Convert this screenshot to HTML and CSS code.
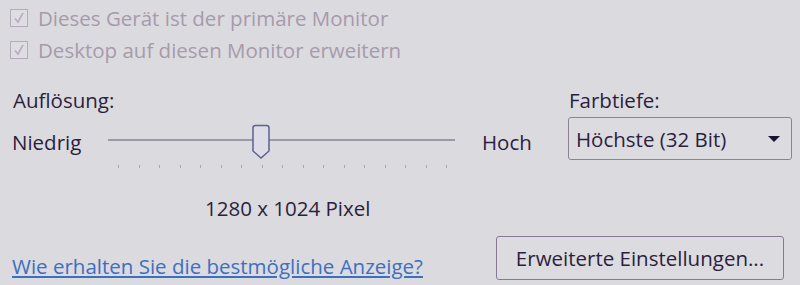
FILE: index.html
```html
<!DOCTYPE html>
<html lang="de">
<head>
    <meta charset="UTF-8">
    <title>Bildschirmauflösung</title>
    <link rel="stylesheet" href="styles.css">
</head>
<body>
<div class="panel">
    <div class="checks">
        <label class="check-row">
            <span class="check-box"><svg width="16" height="16" viewBox="0 0 16 16"><path d="M4 8.5 L7 12 L12 3" fill="none" stroke="#b8aec0" stroke-width="1.6"/></svg></span>
            Dieses Gerät ist der primäre Monitor
        </label>
        <label class="check-row">
            <span class="check-box"><svg width="16" height="16" viewBox="0 0 16 16"><path d="M4 8.5 L7 12 L12 3" fill="none" stroke="#b8aec0" stroke-width="1.6"/></svg></span>
            Desktop auf diesen Monitor erweitern
        </label>
    </div>

    <div class="settings">
        <div class="res-col">
            <div class="caption">Auflösung:</div>
            <div class="slider-row">
                <span class="end-label">Niedrig</span>
                <div class="slider">
                    <div class="track"></div>
                    <svg class="thumb" width="20" height="36" viewBox="0 0 20 36">
                        <path d="M2 4 Q2 1.5 4.5 1.5 H15.5 Q18 1.5 18 4 V27 L10 34 L2 27 Z" fill="#dddce6" stroke="#5e6090" stroke-width="1.5"/>
                    </svg>
                    <div class="ticks">
                        <i></i><i></i><i></i><i></i><i></i><i></i><i></i><i></i><i></i>
                        <i></i><i></i><i></i><i></i><i></i><i></i><i></i><i></i>
                    </div>
                </div>
                <span class="end-label high">Hoch</span>
            </div>
            <div class="pixels">1280 x 1024 Pixel</div>
        </div>
        <div class="depth-col">
            <div class="caption">Farbtiefe:</div>
            <div class="select">
                <span>Höchste (32 Bit)</span>
                <span class="arrow"></span>
            </div>
        </div>
    </div>

    <div class="bottom">
        <a class="help-link" href="#">Wie erhalten Sie die bestmögliche Anzeige?</a>
        <button class="btn">Erweiterte Einstellungen...</button>
    </div>
</div>
</body>
</html>
```

FILE: styles.css
```css
body{
    margin: 0;
    background-color: #dbdadf;
    font-family: "Open Sans", "Noto Sans", sans-serif;
    font-size: 20.5px;
    color: #2b1f3e;
}
.panel{
    width: 800px;
    height: 285px;
    padding: 0 0 0 10px;
    box-sizing: border-box;
    overflow: hidden;
}
.checks{
    padding-top: 2px;
}
.check-row{
    display: flex;
    align-items: center;
    height: 32px;
    color: #a79aab;
}
.check-box{
    width: 16px;
    height: 16px;
    border: 1px solid #b4acbc;
    background-color: #dedde2;
    margin-right: 10px;
    display: flex;
}
.settings{
    display: flex;
    margin-top: 20px;
}
.res-col{
    width: 556px;
    padding-left: 2px;
}
.caption{
    height: 28px;
    line-height: 28px;
}
.slider-row{
    display: flex;
    align-items: flex-start;
    margin-top: 10px;
}
.end-label{
    line-height: 36px;
    width: 96px;
}
.end-label.high{
    width: auto;
    margin-left: 27px;
}
.slider{
    position: relative;
    width: 347px;
    height: 46px;
}
.track{
    margin-top: 15px;
    height: 2px;
    background-color: #9c98a8;
}
.thumb{
    position: absolute;
    left: 143px;
    top: 0;
}
.ticks{
    display: flex;
    justify-content: space-between;
    margin: 24px 8px 0 10px;
}
.ticks i{
    width: 1px;
    height: 3px;
    background-color: #aaa6b2;
}
.pixels{
    margin: 24px 0 0 193px;
    line-height: 28px;
}
.depth-col{
    width: 224px;
}
.caption,
.depth-col .caption{
    padding-left: 1px;
}
.select{
    margin-top: 3px;
    height: 43px;
    box-sizing: border-box;
    border: 1px solid #8c8496;
    border-radius: 3px;
    display: flex;
    align-items: center;
    justify-content: space-between;
    padding: 0 11px 0 7px;
    background-color: #dcdbe0;
}
.arrow{
    width: 0;
    height: 0;
    border-left: 6px solid transparent;
    border-right: 6px solid transparent;
    border-top: 6px solid #1a1430;
}
.bottom{
    display: flex;
    justify-content: space-between;
    align-items: flex-end;
    margin-top: 14px;
    padding-right: 16px;
}
.help-link{
    color: #3d6fc0;
    padding-left: 2px;
    line-height: 28px;
}
.btn{
    width: 288px;
    height: 44px;
    font: inherit;
    color: #2b1f3e;
    background-color: #dcdbe0;
    border: 1px solid #887898;
    border-radius: 3px;
}
```
